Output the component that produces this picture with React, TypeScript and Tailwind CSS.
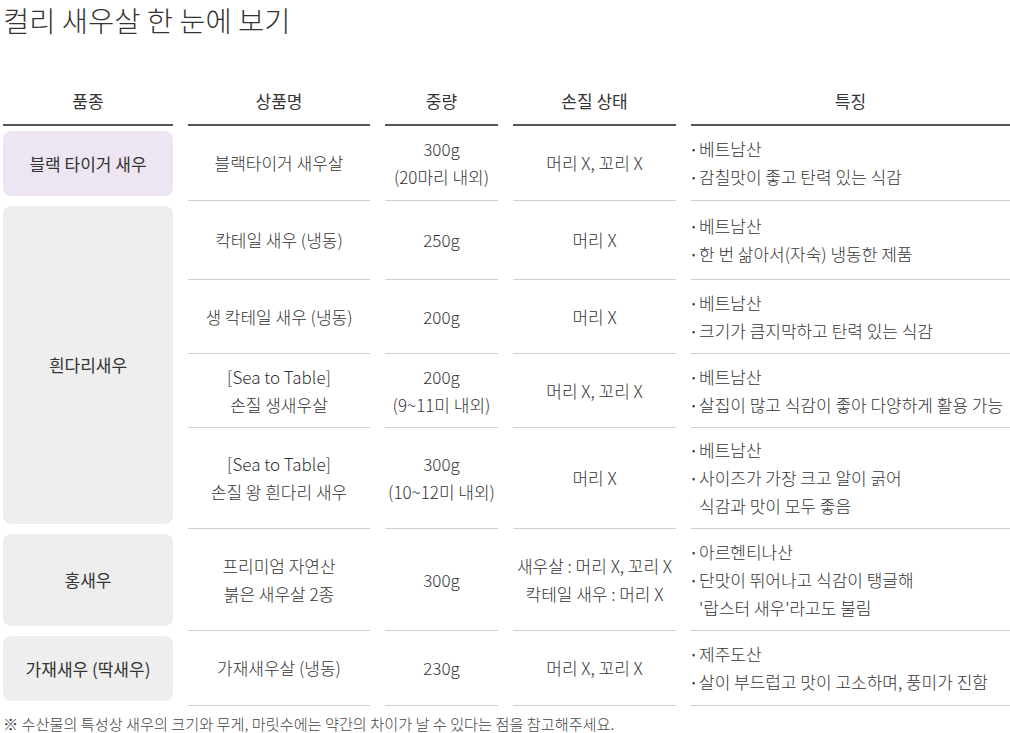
import React from "react";

type Row = {
  name: string[];
  weight: string[];
  cond: string[];
  feats: string[][];
  pad: string;
};

type Group = {
  label: string;
  purple?: boolean;
  rows: Row[];
};

const groups: Group[] = [
  {
    label: "블랙 타이거 새우",
    purple: true,
    rows: [
      {
        name: ["블랙타이거 새우살"],
        weight: ["300g", "(20마리 내외)"],
        cond: ["머리 X, 꼬리 X"],
        feats: [["베트남산"], ["감칠맛이 좋고 탄력 있는 식감"]],
        pad: "py-[9px]",
      },
    ],
  },
  {
    label: "흰다리새우",
    rows: [
      {
        name: ["칵테일 새우 (냉동)"],
        weight: ["250g"],
        cond: ["머리 X"],
        feats: [["베트남산"], ["한 번 삶아서(자숙) 냉동한 제품"]],
        pad: "py-[11px]",
      },
      {
        name: ["생 칵테일 새우 (냉동)"],
        weight: ["200g"],
        cond: ["머리 X"],
        feats: [["베트남산"], ["크기가 큼지막하고 탄력 있는 식감"]],
        pad: "pt-[9px] pb-[8px]",
      },
      {
        name: ["[Sea to Table]", "손질 생새우살"],
        weight: ["200g", "(9~11미 내외)"],
        cond: ["머리 X, 꼬리 X"],
        feats: [["베트남산"], ["살집이 많고 식감이 좋아 다양하게 활용 가능"]],
        pad: "pt-[9px] pb-[8px]",
      },
      {
        name: ["[Sea to Table]", "손질 왕 흰다리 새우"],
        weight: ["300g", "(10~12미 내외)"],
        cond: ["머리 X"],
        feats: [["베트남산"], ["사이즈가 가장 크고 알이 굵어", "식감과 맛이 모두 좋음"]],
        pad: "py-[8px]",
      },
    ],
  },
  {
    label: "홍새우",
    rows: [
      {
        name: ["프리미엄 자연산", "붉은 새우살 2종"],
        weight: ["300g"],
        cond: ["새우살 : 머리 X, 꼬리 X", "칵테일 새우 : 머리 X"],
        feats: [["아르헨티나산"], ["단맛이 뛰어나고 식감이 탱글해", "'랍스터 새우'라고도 불림"]],
        pad: "pt-[9px] pb-[8px]",
      },
    ],
  },
  {
    label: "가재새우 (딱새우)",
    rows: [
      {
        name: ["가재새우살 (냉동)"],
        weight: ["230g"],
        cond: ["머리 X, 꼬리 X"],
        feats: [["제주도산"], ["살이 부드럽고 맛이 고소하며, 풍미가 진함"]],
        pad: "py-[9px]",
      },
    ],
  },
];

const headers = ["품종", "상품명", "중량", "손질 상태", "특징"];

const Lines = ({ lines }: { lines: string[] }) => (
  <div className="flex flex-col items-center">
    {lines.map((l) => (
      <span key={l}>{l}</span>
    ))}
  </div>
);

export default function App() {
  let rowStart = 2;
  return (
    <div
      className="w-[1010px] bg-white pl-[3px] text-[#333] font-light"
      style={{ fontFamily: '"Noto Sans CJK KR", "Noto Sans", sans-serif' }}
    >
      <h1 className="text-[28.5px] leading-[40px] font-light text-[#333]">
        컬리 새우살 한 눈에 보기
      </h1>

      <div className="mt-[47px] grid grid-cols-[170px_182px_113px_163px_319px] gap-x-[15px] text-[17px] leading-[28px]">
        {headers.map((h) => (
          <div
            key={h}
            className="border-b-[2px] border-[#555] pb-[9px] text-center font-normal"
          >
            {h}
          </div>
        ))}

        {groups.map((g) => {
          const start = rowStart;
          rowStart += g.rows.length;
          return (
            <React.Fragment key={g.label}>
              <div
                className="py-[5px] flex"
                style={{ gridColumn: 1, gridRow: `${start} / span ${g.rows.length}` }}
              >
                <div
                  className={`flex-1 flex items-center justify-center rounded-[8px] font-normal ${
                    g.purple ? "bg-[#ede5f1]" : "bg-[#eeeeee]"
                  }`}
                >
                  {g.label}
                </div>
              </div>
              {g.rows.map((r, i) => (
                <React.Fragment key={i}>
                  <div
                    className={`col-start-2 flex items-center justify-center border-b border-[#cfcfcf] text-center ${r.pad}`}
                    style={{ gridRow: start + i }}
                  >
                    <Lines lines={r.name} />
                  </div>
                  <div
                    className={`col-start-3 flex items-center justify-center border-b border-[#cfcfcf] text-center ${r.pad}`}
                    style={{ gridRow: start + i }}
                  >
                    <Lines lines={r.weight} />
                  </div>
                  <div
                    className={`col-start-4 flex items-center justify-center border-b border-[#cfcfcf] text-center ${r.pad}`}
                    style={{ gridRow: start + i }}
                  >
                    <Lines lines={r.cond} />
                  </div>
                  <div
                    className={`col-start-5 flex flex-col justify-center border-b border-[#cfcfcf] ${r.pad}`}
                    style={{ gridRow: start + i }}
                  >
                    {r.feats.map((f) => (
                      <div key={f[0]} className="flex">
                        <span className="w-[8px] shrink-0 text-[10px] leading-[28px] pl-[1px]">•</span>
                        <div className="flex flex-col">
                          {f.map((t) => (
                            <span key={t}>{t}</span>
                          ))}
                        </div>
                      </div>
                    ))}
                  </div>
                </React.Fragment>
              ))}
            </React.Fragment>
          );
        })}
      </div>

      <p className="mt-[5px] text-[15.2px] leading-[24px] text-[#444]">
        ※ 수산물의 특성상 새우의 크기와 무게, 마릿수에는 약간의 차이가 날 수 있다는 점을 참고해주세요.
      </p>
    </div>
  );
}
